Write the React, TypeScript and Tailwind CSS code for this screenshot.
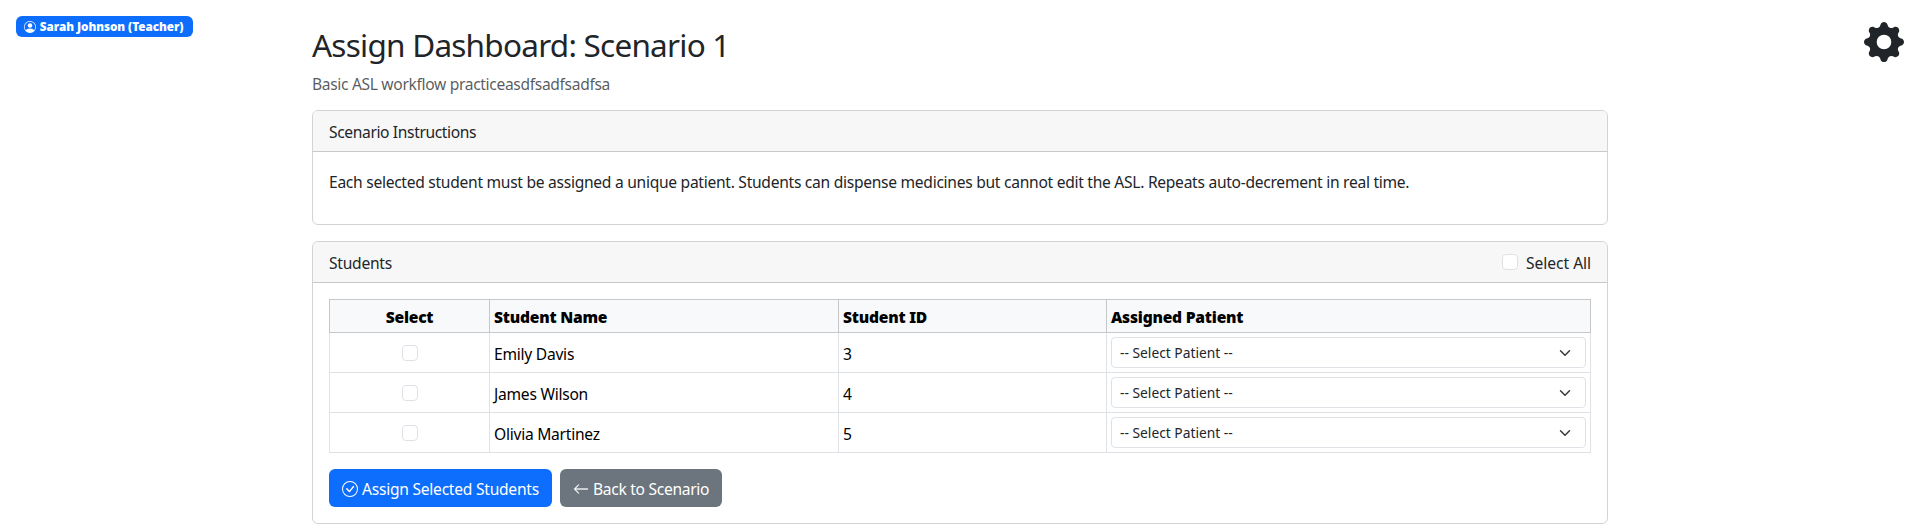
import { BsArrowLeft, BsCheckCircle, BsGearFill, BsPersonCircle } from "react-icons/bs";

const students = [
  { id: 3, name: "Emily Davis" },
  { id: 4, name: "James Wilson" },
  { id: 5, name: "Olivia Martinez" },
];

function Checkbox() {
  return (
    <input
      type="checkbox"
      className="block size-4 shrink-0 appearance-none rounded border border-[#dee2e6] bg-white"
    />
  );
}

function PatientSelect() {
  return (
    <button className="flex h-[31px] w-full items-center justify-between rounded border border-[#dee2e6] bg-white pr-3 pl-2 text-[13.8px] tracking-normal text-[#212529]">
      <span className="pt-px">-- Select Patient --</span>
      <svg viewBox="0 0 16 16" className="h-3 w-4" fill="none" stroke="#343a40" strokeWidth="2" strokeLinecap="round" strokeLinejoin="round">
        <path d="m2 5 6 6 6-6" />
      </svg>
    </button>
  );
}

export default function App() {
  return (
    <div className="flex h-[524px] items-start justify-between bg-white font-['Noto_Sans',sans-serif] text-[15.6px] leading-6 tracking-[-0.25px] text-[#212529]">
      <div className="flex w-[312px] pt-4 pl-4">
        <span className="flex h-[21px] w-[177px] items-center gap-1 rounded-md bg-[#0d6efd] pl-[7.8px] text-[11.7px] leading-3 font-black tracking-[-0.05px] whitespace-nowrap text-white">
          <BsPersonCircle className="size-3 shrink-0" />
          <span className="pb-px">Sarah Johnson (Teacher)</span>
        </span>
      </div>

      <main className="w-[1296px]">
        <h2 className="mt-[26px] text-[31.5px] leading-[38px] tracking-[-0.76px] whitespace-nowrap">Assign Dashboard: Scenario 1</h2>
        <p className="mt-2 tracking-[-0.33px] text-[#212529]/75">Basic ASL workflow practiceasdfsadfsadfsa</p>

        <section className="mt-[14px] h-[115px] rounded-md border border-[#d3d3d4]">
          <div className="h-[41px] rounded-t-[5px] border-b border-[#c8c8c8] bg-[#f7f7f7] px-4 pt-[9px] tracking-[-0.37px]">
            <span>Scenario Instructions</span>
          </div>
          <p className="px-4 pt-[18px] tracking-[-0.28px]">
            Each selected student must be assigned a unique patient. Students can dispense medicines but cannot edit the ASL. Repeats auto-decrement in real time.
          </p>
        </section>

        <section className="mt-4 h-[283px] rounded-md border border-[#d3d3d4]">
          <div className="flex h-[41px] justify-between rounded-t-[5px] border-b border-[#c8c8c8] bg-[#f7f7f7] px-4 pt-[9px]">
            <span>Students</span>
            <label className="flex gap-2">
              <span className="pt-[3px]"><Checkbox /></span>
              <span className="w-[65px] whitespace-nowrap tracking-[-0.03px]">Select All</span>
            </label>
          </div>
          <div className="px-4 pt-4">
            <table className="w-[1261px] table-fixed border-collapse text-black">
              <colgroup>
                <col className="w-[160px]" />
                <col className="w-[349px]" />
                <col className="w-[268px]" />
                <col className="w-[484px]" />
              </colgroup>
              <thead>
                <tr className="h-[33px] bg-[#f8f9fa] text-left tracking-[-0.22px] *:border *:border-[#c6c7c8] *:px-1 *:pt-[2px] *:pb-0 *:font-black">
                  <th className="text-center">Select</th>
                  <th>Student Name</th>
                  <th>Student ID</th>
                  <th>Assigned Patient</th>
                </tr>
              </thead>
              <tbody>
                {students.map((s) => (
                  <tr key={s.id} className="h-10 *:border *:border-[#dee2e6] *:px-1 *:py-0">
                    <td><div className="flex justify-center"><Checkbox /></div></td>
                    <td><div className="pt-[2px]">{s.name}</div></td>
                    <td><div className="pt-[2px]">{s.id}</div></td>
                    <td><PatientSelect /></td>
                  </tr>
                ))}
              </tbody>
            </table>
            <div className="mt-4 flex gap-2 text-white">
              <button className="flex h-[38px] w-[223px] items-center gap-1 rounded-md bg-[#0d6efd] pl-[13px] whitespace-nowrap">
                <BsCheckCircle className="mt-[2px] size-4 shrink-0" />
                <span className="pt-px">Assign Selected Students</span>
              </button>
              <button className="flex h-[38px] w-[162px] items-center gap-1 rounded-md bg-[#6c757d] pl-[13px] whitespace-nowrap">
                <BsArrowLeft className="mt-[2px] size-4 shrink-0" strokeWidth={0.3} />
                <span className="pt-px tracking-[-0.3px]">Back to Scenario</span>
              </button>
            </div>
          </div>
        </section>
      </main>

      <div className="flex w-[312px] justify-end pt-[22px] pr-4">
        <BsGearFill className="size-10" />
      </div>
    </div>
  );
}
